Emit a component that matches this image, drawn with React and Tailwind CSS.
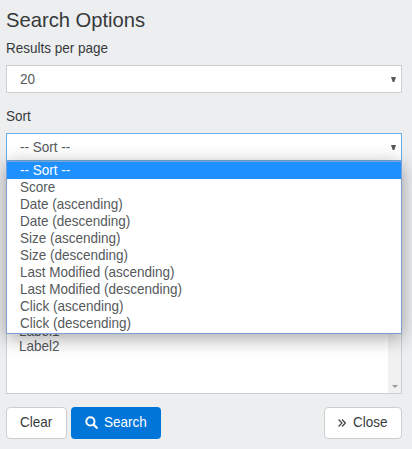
const sortOptions = [
  "-- Sort --",
  "Score",
  "Date (ascending)",
  "Date (descending)",
  "Size (ascending)",
  "Size (descending)",
  "Last Modified (ascending)",
  "Last Modified (descending)",
  "Click (ascending)",
  "Click (descending)",
];

// Slightly condensed text run.
function Label({ children }) {
  return <span className="inline-block origin-left scale-x-[0.9] whitespace-nowrap">{children}</span>;
}

function Arrow() {
  return (
    <svg className="h-[5px] w-[5px]" viewBox="0 0 5 5" fill="#55595c">
      <path d="M0 0H5L3.3 5H1.7Z" />
    </svg>
  );
}

function Select({ value, open, children }) {
  return (
    <div
      className={
        "relative flex h-7 items-center justify-between border bg-white pr-[5px] pl-[13.4px] text-[#55595c] " +
        (open ? "border-[#66afe9]" : "border-[#cccfd0]")
      }
    >
      <Label>{value}</Label>
      <Arrow />
      {children}
    </div>
  );
}

function SortMenu() {
  return (
    <ul className="absolute -right-px -left-px top-[27px] z-10 h-[173px] border border-[#7b9fd6] bg-white shadow-[0_4px_18px_rgba(0,0,0,0.36)]">
      {sortOptions.map((option, i) => (
        <li
          key={option}
          className={
            "h-[17px] pl-[13.4px] leading-[16px] " +
            (i === 0 ? "bg-[#1e90ff] text-white" : "")
          }
        >
          <Label>{option}</Label>
        </li>
      ))}
    </ul>
  );
}

export default function App() {
  return (
    <div className="h-[449px] w-[412px] overflow-hidden bg-[#eceeef] px-[6px] pr-[10px] pt-[8px] font-['Liberation_Sans',Arial,sans-serif] text-[15px] text-[#373a3c]">
      <h2 className="h-[24px] text-[20.2px] leading-[24px]">Search Options</h2>
      <div className="mt-[6px] mb-[7px] h-5 leading-5">
        <Label>Results per page</Label>
      </div>
      <Select value="20" />
      <div className="mt-[13px] mb-[7px] h-5 leading-5">
        <Label>Sort</Label>
      </div>
      <Select value="-- Sort --" open>
        <SortMenu />
      </Select>
      <div className="mt-10 flex h-[193px] justify-between border border-[#cccfd0] bg-white text-[#55595c]">
        <ul className="pt-[121px] pl-[12px] leading-[16px]">
          <li className="h-[15px]"><Label>Label1</Label></li>
          <li><Label>Label2</Label></li>
        </ul>
        <div className="flex w-[13px] items-end justify-center bg-[#f1f1f1] pb-[5px]">
          <svg className="h-[3px] w-[6px]" viewBox="0 0 6 3" fill="#999">
            <path d="M0 0H6L3 3Z" />
          </svg>
        </div>
      </div>
      <div className="mt-[13px] flex h-8 items-center">
        <button className="h-8 w-[61px] rounded-[4px] border border-[#cccfd0] bg-white pb-[2px] pl-[13.4px] text-left">
          <Label>Clear</Label>
        </button>
        <button className="ml-[4px] flex h-8 w-[90px] items-center rounded-[4px] bg-[#0275d8] pb-[2px] pl-[14px] text-white">
          <svg className="mt-[1px] mr-[6px] h-[13px] w-[13px]" viewBox="0 0 13 13" fill="none" stroke="currentColor" strokeLinecap="round">
            <circle cx="5.4" cy="5.4" r="4.1" strokeWidth="2" />
            <path d="M8.7 8.7L11.8 11.8" strokeWidth="2.3" />
          </svg>
          <Label>Search</Label>
        </button>
        <button className="ml-auto flex h-8 w-[78px] items-center rounded-[4px] border border-[#cccfd0] bg-white pb-[2px] pl-[13px]">
          <svg className="mt-[2px] mr-[7px] h-[8px] w-[8px]" viewBox="0 0 8 8" fill="none" stroke="currentColor" strokeWidth="1.1">
            <path d="M0.6 0.5L4 4L0.6 7.5M4 0.5L7.4 4L4 7.5" />
          </svg>
          <Label>Close</Label>
        </button>
      </div>
    </div>
  );
}
